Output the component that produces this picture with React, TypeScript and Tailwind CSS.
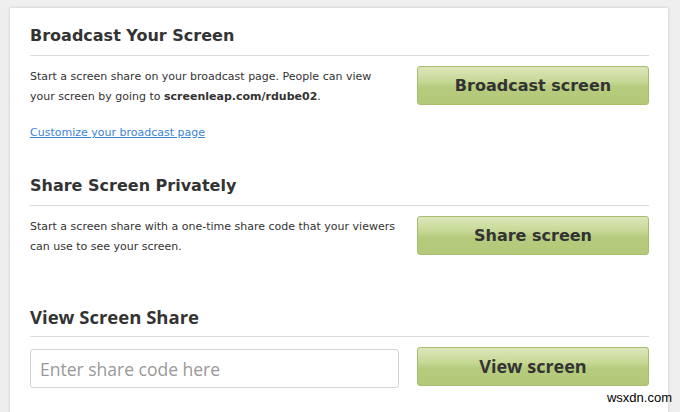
import React from "react";

const btn =
  "flex items-center justify-center w-[232px] h-[39px] rounded-[3px] border border-[#a8bd6e] bg-[linear-gradient(to_bottom,#dce7bb_0%,#c6d894_40%,#b6cb7d_55%,#b3c879_100%)] text-[#333] font-bold text-[16px]";

export default function App() {
  return (
    <div className="w-[680px] h-[412px] bg-[#efefef] overflow-hidden relative" style={{ fontFamily: '"DejaVu Sans", Verdana, sans-serif' }}>
      <div className="ml-[10px] mt-[8px] w-[658px] h-[420px] bg-white shadow-[0_0_3px_rgba(0,0,0,0.18)] px-[20px] pt-[16px] text-[#333]">
        {/* Section 1 */}
        <h2 className="text-[16px] font-bold leading-[24px]">Broadcast Your Screen</h2>
        <div className="mt-[7px] w-[619px] h-px bg-[#dcdcdc]" />
        <div className="flex justify-between w-[619px] mt-[10px]">
          <div className="w-[366px] text-[11px] leading-[20px] pt-[1px]">
            <p>
              Start a screen share on your broadcast page. People can view your screen by going to{" "}
              <b>screenleap.com/rdube02</b>.
            </p>
            <a href="#" className="block mt-[16px] text-[#3b85d6] underline">Customize your broadcast page</a>
          </div>
          <button className={btn}>Broadcast screen</button>
        </div>

        {/* Section 2 */}
        <h2 className="mt-[31px] text-[16px] font-bold leading-[24px]">Share Screen Privately</h2>
        <div className="mt-[7px] w-[619px] h-px bg-[#dcdcdc]" />
        <div className="flex justify-between w-[619px] mt-[10px]">
          <div className="w-[366px] text-[11px] leading-[20px] pt-[1px]">
            <p>Start a screen share with a one-time share code that your viewers can use to see your screen.</p>
          </div>
          <button className={btn}>Share screen</button>
        </div>

        {/* Section 3 */}
        <h2 className="mt-[48px] text-[18.5px] font-bold leading-[24px]" style={{ fontFamily: '"Open Sans", sans-serif' }}>View Screen Share</h2>
        <div className="mt-[7px] w-[619px] h-px bg-[#dcdcdc]" />
        <div className="flex justify-between w-[619px] mt-[10px]" style={{ fontFamily: '"Open Sans", sans-serif' }}>
          <input
            placeholder="Enter share code here"
            className="mt-[2px] w-[369px] h-[39px] rounded-[3px] border border-[#d4d4d4] px-[9px] text-[17.5px] placeholder:text-[#999] outline-none"
          />
          <button className={btn} style={{ fontFamily: '"Open Sans", sans-serif', fontSize: 18 }}>View screen</button>
        </div>
      </div>
      <div className="absolute right-[8px] bottom-[5px] text-[13px] text-black" style={{ fontFamily: '"Liberation Sans", Arial, sans-serif' }}>wsxdn.com</div>
    </div>
  );
}
